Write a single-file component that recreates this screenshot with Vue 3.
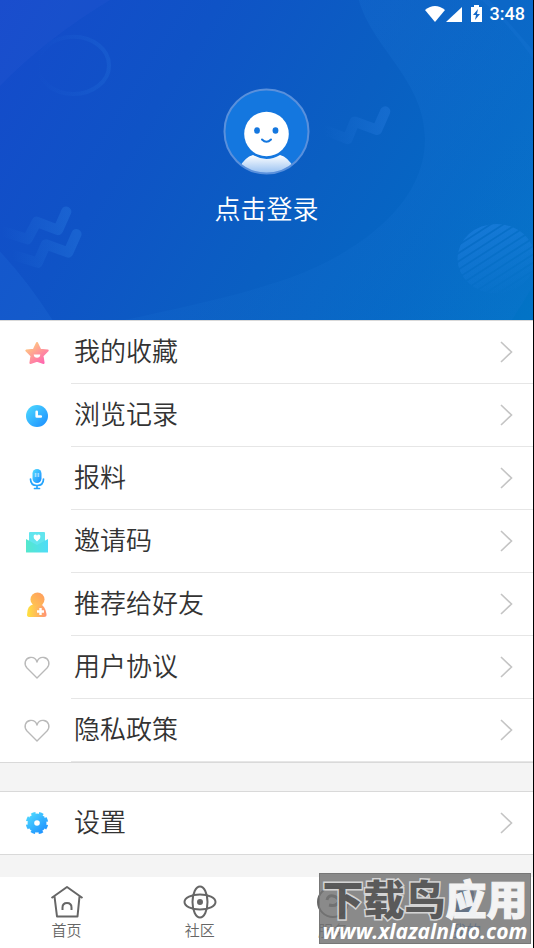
<script setup>
const rows = [
  { id: 'star', label: '我的收藏' },
  { id: 'clock', label: '浏览记录' },
  { id: 'mic', label: '报料' },
  { id: 'mail', label: '邀请码' },
  { id: 'friend', label: '推荐给好友' },
  { id: 'heart', label: '用户协议' },
  { id: 'heart', label: '隐私政策' },
]
const settings = [{ id: 'gear', label: '设置' }]
const groups = [rows, settings]
const tabs = [
  { id: 'home', label: '首页' },
  { id: 'community', label: '社区' },
  { id: 'service', label: '服务' },
  { id: 'mine', label: '我的', active: true },
]
</script>

<template>
  <div class="screen">
    <header class="hero">
      <svg class="hero-art" viewBox="0 0 523 313" preserveAspectRatio="none" aria-hidden="true">
        <defs>
          <linearGradient id="zigFade" x1="0" x2="1"><stop offset="0" stop-color="#2c80e4" stop-opacity="0" /><stop offset="1" stop-color="#2c80e4" stop-opacity=".34" /></linearGradient>
          <linearGradient id="ringFade" x1="0" x2="1"><stop offset="0" stop-color="#2c80e4" stop-opacity="0" /><stop offset="1" stop-color="#2c80e4" stop-opacity=".2" /></linearGradient>
          <linearGradient id="ballFade" gradientUnits="userSpaceOnUse" x1="470" y1="218" x2="492" y2="290"><stop offset="0" stop-color="#2a8aec" stop-opacity=".42" /><stop offset="1" stop-color="#2a8aec" stop-opacity="0" /></linearGradient>
          <linearGradient id="waveFade" gradientUnits="userSpaceOnUse" x1="534" y1="60" x2="470" y2="320"><stop offset="0" stop-color="#1c78d8" stop-opacity=".22" /><stop offset="1" stop-color="#1c78d8" stop-opacity=".14" /></linearGradient>
          <clipPath id="ballClip"><ellipse cx="487" cy="253" rx="38" ry="34" /></clipPath>
        </defs>
        <path d="M0 0H108Q45 38 0 84Z" fill="#3060d8" opacity=".18" />
        <path d="M352 0C366 48 416 78 417 135C418 195 360 244 284 272C220 294 150 306 92 320H498L534 262V62L480 0Z" fill="url(#waveFade)" />
        <path d="M472 0H534V74Q505 28 472 0Z" fill="#2c80e4" opacity=".14" />
        <path d="M0 246Q30 278 56 320H0Z" fill="#2a76e0" opacity=".2" />
        <ellipse cx="72" cy="64" rx="35" ry="28" fill="none" stroke="url(#ringFade)" stroke-width="4" />
        <g fill="none" stroke="url(#zigFade)" stroke-width="10" stroke-linecap="round" stroke-linejoin="round">
          <path d="M318 127L341 136L348 119L370 127L378 109" />
          <path d="M2 226L27 234L36 217L57 225L65 207" />
          <path d="M12 249L37 257L45 239L67 247L75 229" />
        </g>
        <g clip-path="url(#ballClip)">
          <path v-for="n in 16" :key="n" :d="`M440 ${202 + n * 8}L540 ${138 + n * 8}`" stroke="url(#ballFade)" stroke-width="5" />
        </g>
      </svg>
      <div class="status">
        <svg class="signals" viewBox="0 0 58 18" aria-hidden="true">
          <path d="M0 5Q10-3 20 5L10 17Z" fill="#fff" />
          <path d="M37 2V17H21Z" fill="#fff" />
          <path d="M46 2h3V0h5v2h3v15H46Z" fill="#fff" />
          <path d="M53 4l-5 6h3l-1 5 5-6h-3Z" fill="#1468c8" />
        </svg>
        <span>3:48</span>
      </div>
      <button class="login" type="button">
        <svg class="avatar" viewBox="0 0 87 87" aria-hidden="true">
          <defs>
            <linearGradient id="bodyFade" x1="0" y1="0" x2="0" y2="1"><stop offset="0" stop-color="#fff" /><stop offset="1" stop-color="#8dbaf0" /></linearGradient>
            <clipPath id="avatarClip"><circle cx="43.5" cy="43.5" r="42" /></clipPath>
          </defs>
          <circle cx="43.5" cy="43.5" r="42" fill="#1477df" />
          <g clip-path="url(#avatarClip)">
            <path d="M16 80Q22 69 30 67Q43.500 75 57 67Q65 69 71 80V87H16Z" fill="url(#bodyFade)" />
          </g>
          <circle cx="43.500" cy="46" r="24" fill="#1477df" />
          <circle cx="43.500" cy="46" r="22.300" fill="#fff" />
          <ellipse cx="34" cy="42.500" rx="2.900" ry="3.200" fill="#1477df" />
          <ellipse cx="52.500" cy="42.500" rx="2.900" ry="3.200" fill="#1477df" />
          <path d="M39 51.500Q43.500 56 48 51.500" fill="none" stroke="#1477df" stroke-width="2" stroke-linecap="round" />
          <circle cx="43.500" cy="43.500" r="42" fill="none" stroke="#5990dc" stroke-width="2" />
        </svg>
        <span>点击登录</span>
      </button>
    </header>

    <main class="content">
      <ul v-for="(group, g) in groups" :key="g" class="group">
        <li v-for="row in group" :key="row.label">
          <a class="row" href="#">
            <svg class="icon" viewBox="0 0 28 28" aria-hidden="true">
              <defs>
                <linearGradient id="pink" x1="0" y1="0" x2=".8" y2="1"><stop offset="0" stop-color="#ffd77a" /><stop offset="1" stop-color="#ff66b0" /></linearGradient>
                <linearGradient id="blue" x1="0" y1="0" x2="1" y2="1"><stop offset="0" stop-color="#50dcff" /><stop offset="1" stop-color="#1a8cff" /></linearGradient>
                <linearGradient id="mint" x1="0" y1="0" x2="1" y2="0"><stop offset="0" stop-color="#55e8cc" /><stop offset="1" stop-color="#4fdcf8" /></linearGradient>
                <linearGradient id="gold" x1="1" y1="0" x2="0" y2="1"><stop offset="0" stop-color="#ff9a60" /><stop offset="1" stop-color="#ffc850" /></linearGradient>
                <linearGradient id="goldBody" x1="0" y1="0" x2="1" y2="0"><stop offset="0" stop-color="#ffe23e" /><stop offset="1" stop-color="#ff9276" /></linearGradient>
              </defs>
              <template v-if="row.id === 'star'">
                <path d="M14 4L17.200 10.800L24.700 11.600L19.500 16.700L20.600 24L14 21.800L7.400 24L8.500 16.700L3.300 11.600L10.800 10.800Z" fill="url(#pink)" stroke="url(#pink)" stroke-width="2" stroke-linejoin="round" />
                <path d="M10.700 15.500h6.600q-.3 3.200-3.300 3.200t-3.300-3.200Z" fill="#fff" />
              </template>
              <template v-else-if="row.id === 'clock'">
                <circle cx="14" cy="14" r="11" fill="url(#blue)" />
                <path d="M13.700 9.800V14.500H17.800" fill="none" stroke="#fff" stroke-width="2.600" stroke-linejoin="round" stroke-linecap="round" />
              </template>
              <template v-else-if="row.id === 'mic'">
                <rect x="9.500" y="4" width="9" height="14" rx="4.500" fill="url(#blue)" />
                <path d="M7.500 14Q7.500 20.500 14 20.500T20.500 14M14 20.500V23M11.500 23.500H16.500" fill="none" stroke="#25a4fc" stroke-width="1.700" stroke-linecap="round" />
                <path d="M12.500 8v4M15.500 8v4M11.500 9h5M11.500 11h5" stroke="#fff" stroke-width=".8" opacity=".6" />
              </template>
              <template v-else-if="row.id === 'mail'">
                <rect x="6" y="4" width="16" height="15" rx="1" fill="#62e5ee" />
                <path d="M3 11L14 17L25 11V24q0 .5-.5.500H3.500q-.5 0-.5-.5Z" fill="url(#mint)" />
                <path d="M14 13.500L11 10.500Q9.800 6.600 12.500 6.600Q13.600 6.700 14 7.800Q14.400 6.700 15.500 6.600Q18.200 6.600 17 10.500Z" fill="#fff" />
              </template>
              <template v-else-if="row.id === 'friend'">
                <path d="M4 24Q4 13.500 11 13.500H17Q22 14 23.500 23Q24 26 21 26H7Q4 26 4 24Z" fill="url(#goldBody)" />
                <circle cx="14.500" cy="8.500" r="7" fill="url(#gold)" />
                <path d="M17.500 17V24M14 20.500H21" stroke="#fff" stroke-width="2.400" />
              </template>
              <path v-else-if="row.id === 'heart'" d="M14 24L4 14C.500 10 2 4.500 7 3.500C10.500 3 13 5 14 8C15 5 17.500 3 21 3.500C26 4.500 27.500 10 24 14Z" fill="none" stroke="#b9b9b9" stroke-width="1.400" stroke-linejoin="round" />
              <template v-else>
                <circle cx="14" cy="14" r="9.500" fill="url(#blue)" />
                <circle cx="14" cy="14" r="9.500" fill="none" stroke="url(#blue)" stroke-width="3.400" stroke-dasharray="4.200 3.261" transform="rotate(9.800 14 14)" />
                <circle cx="14" cy="14" r="2.800" fill="#fff" />
              </template>
            </svg>
            <span class="label">
              <span class="name">{{ row.label }}</span>
              <svg class="chevron" viewBox="0 0 14 22" aria-hidden="true"><path d="M2 1L12.500 11L2 21" fill="none" stroke="#c4c4c4" stroke-width="1.600" /></svg>
            </span>
          </a>
        </li>
      </ul>
    </main>

    <nav class="tabs">
      <a v-for="tab in tabs" :key="tab.id" href="#" :class="{ active: tab.active }">
        <svg viewBox="0 0 36 36" fill="none" stroke="currentColor" stroke-width="2" aria-hidden="true">
          <g v-if="tab.id === 'home'">
            <path d="M2.500 14L18 3L33.500 14M5.500 12.500L8 32.500H28.500L30.500 12.500" stroke-linejoin="round" />
            <path d="M13.500 26V23.500Q13.500 19 18 19T22.500 23.500V26" />
          </g>
          <g v-else-if="tab.id === 'community'">
            <ellipse cx="18" cy="18" rx="7.500" ry="15.500" /><ellipse cx="18" cy="18" rx="15.500" ry="7.500" /><circle cx="18" cy="18" r="2" fill="currentColor" />
          </g>
          <g v-else-if="tab.id === 'service'">
            <circle cx="18" cy="18" r="15" /><path d="M12 16Q13 11 18 12T24 17Q22 23 14 21" stroke-width="3" />
          </g>
          <g v-else fill="currentColor">
            <circle cx="18" cy="10" r="7" /><path d="M9 31V21Q9 13 18 13T27 21V31ZM3 32H33" />
          </g>
        </svg>
        <span>{{ tab.label }}</span>
      </a>
    </nav>

    <aside class="mark">
      <strong>下载鸟<b>应用</b></strong>
      <span>www.xlazalnlao.com</span>
    </aside>
  </div>
</template>

<style>
body { margin: 0; background: #f4f4f4; }
</style>

<style scoped>
.screen {
  position: relative;
  display: flex;
  flex-direction: column;
  min-height: 100vh;
  box-sizing: border-box;
  border-right: 1px solid #000;
  background: #f4f4f4;
  color: #333;
  font-family: Roboto, "Noto Sans CJK SC", sans-serif;
}
.hero {
  position: relative;
  height: 320px;
  overflow: hidden;
  background: linear-gradient(122deg, #154acb 0%, #0f53c6 30%, #0a5fc2 58%, #0468c4 80%, #0274c6 100%);
  color: #fff;
}
.hero-art { position: absolute; inset: 0; width: 100%; height: 100%; }
.status {
  position: relative;
  display: flex;
  justify-content: flex-end;
  align-items: center;
  gap: 7px;
  height: 27px;
  padding-right: 8px;
  font-size: 18px;
  font-weight: 500;
}
.signals { width: 58px; height: 18px; }
.login {
  position: relative;
  display: flex;
  flex-direction: column;
  align-items: center;
  gap: 16px;
  margin: 61px auto 0;
  padding: 0;
  border: 0;
  background: none;
  color: inherit;
  font-family: inherit;
  font-size: 26px;
  font-weight: 350;
  line-height: 38px;
}
.avatar { width: 87px; height: 87px; }
.content { flex: 1; }
.group {
  margin: 0 0 28px;
  padding: 0;
  border-top: 1px solid #d9d9d9;
  border-bottom: 1px solid #d9d9d9;
  background: #fff;
  list-style: none;
}
.group:last-child { margin-bottom: 22px; }
.row {
  display: flex;
  align-items: center;
  height: 63px;
  padding-left: 23px;
  color: inherit;
  text-decoration: none;
}
.icon { width: 28px; height: 28px; flex: none; }
.label {
  flex: 1;
  display: flex;
  align-items: center;
  justify-content: space-between;
  height: 62px;
  margin-left: 20px;
  padding: 0 20px 0 3px;
  border-bottom: 1px solid #e6e6e6;
  font-size: 26px;
  font-weight: 350;
}
.name { padding-bottom: 6px; }
.group:last-child .row { height: 62px; }
.group:last-child .label { border-bottom: 0; }
.chevron { width: 14px; height: 22px; }
.tabs {
  display: grid;
  grid-template-columns: repeat(4, 1fr);
  height: 71px;
  background: #fff;
}
.tabs a {
  display: flex;
  flex-direction: column;
  align-items: center;
  padding-top: 7px;
  color: #666;
  font-size: 15px;
  font-weight: 350;
  line-height: 22px;
  text-decoration: none;
}
.tabs svg { width: 36px; height: 36px; }
.tabs .active { color: #1a6fe0; }
.mark {
  position: absolute;
  right: 2px;
  bottom: 4px;
  display: flex;
  flex-direction: column;
  align-items: center;
  width: 212px;
  height: 71px;
  box-sizing: border-box;
  border: 1px solid #777;
  background: rgba(116, 116, 116, 0.84);
  color: #fff;
  white-space: nowrap;
}
.mark strong {
  height: 44px;
  color: #555;
  font-size: 41px;
  font-weight: 900;
  line-height: 54px;
  opacity: 0.9;
  -webkit-text-stroke: 3px #ddd;
  paint-order: stroke fill;
}
.mark b { color: #fff; -webkit-text-stroke: 1px #fff; }
.mark span {
  font-family: "Open Sans", sans-serif;
  font-size: 21px;
  font-style: italic;
  font-weight: 700;
  line-height: 26px;
}
</style>
